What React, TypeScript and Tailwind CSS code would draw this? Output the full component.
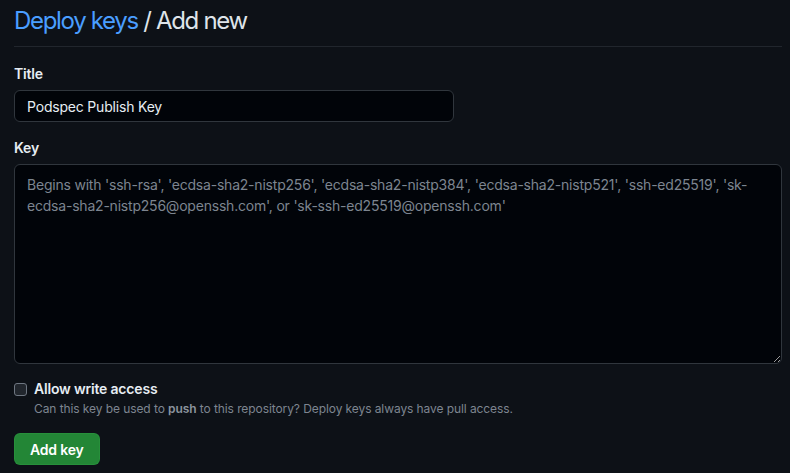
export default function App() {
  return (
    <div className="min-h-[473px] w-full bg-[#0d1117] pl-[14px] pr-[8px] font-['Inter','Liberation_Sans',sans-serif] tracking-[-0.012em] text-[#e6edf3]">
      <div className="border-b border-[#21262d] pt-[5px] pb-[9px]">
        <h1 className="text-[24px] leading-[32px] font-normal tracking-[-0.055em]">
          <a className="text-[#4a9eff]" href="#">Deploy keys</a>
          <span className="text-[#dfe4ea]"> / Add new</span>
        </h1>
      </div>

      <form className="pt-[17px]">
        <label htmlFor="title" className="block text-[14px] leading-[20px] font-semibold">
          Title
        </label>
        <input
          id="title"
          defaultValue="Podspec Publish Key"
          className="mt-[6px] block h-[32px] w-[440px] rounded-md border border-[#30363d] bg-[#010409] px-[12px] text-[14px] text-[#e6edf3] outline-none"
        />

        <label htmlFor="key" className="mt-[16px] block text-[14px] leading-[20px] font-semibold">
          Key
        </label>
        <textarea
          id="key"
          placeholder="Begins with 'ssh-rsa', 'ecdsa-sha2-nistp256', 'ecdsa-sha2-nistp384', 'ecdsa-sha2-nistp521', 'ssh-ed25519', 'sk-ecdsa-sha2-nistp256@openssh.com', or 'sk-ssh-ed25519@openssh.com'"
          className="mt-[6px] block h-[200px] w-full rounded-md border border-[#30363d] bg-[#010409] px-[12px] pt-[9px] pb-[10px] text-[14px] leading-[21px] tracking-[-0.015em] text-[#e6edf3] placeholder:text-[#7d8590] outline-none"
        />

        <div className="mt-[18px] flex items-start gap-[7px]">
          <input type="checkbox" className="mt-[1px] h-[13px] w-[13px] appearance-none rounded-[3px] border border-[#6e7681] bg-[#21262d]" />
          <div>
            <div className="text-[14px] leading-[14px] font-semibold">Allow write access</div>
            <p className="mt-[4px] text-[12px] leading-[18px] tracking-[-0.007em] text-[#7d8590]">
              Can this key be used to <strong className="font-semibold text-[#8b949e]">push</strong> to this repository? Deploy keys always have pull access.
            </p>
          </div>
        </div>

        <button
          type="button"
          className="mt-[15px] h-[32px] rounded-md border border-[#2ea043]/40 bg-[#238636] px-[15px] text-[14px] font-semibold text-white"
        >
          Add key
        </button>
      </form>
    </div>
  );
}
